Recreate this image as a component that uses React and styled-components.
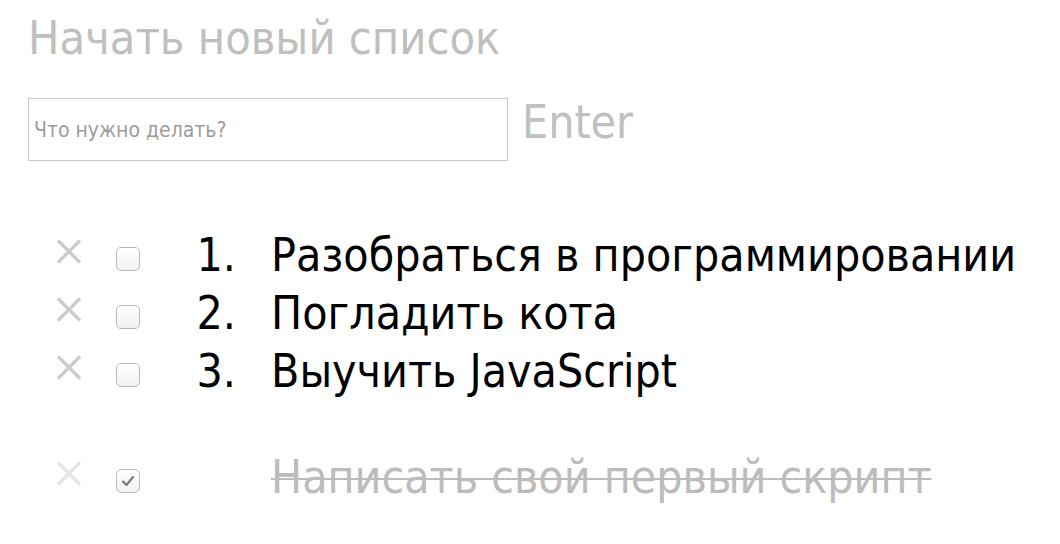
import React from "react";
import styled, { createGlobalStyle } from "styled-components";

const Global = createGlobalStyle`
  html, body { margin: 0; padding: 0; background: #fff; }
  body { font-family: "DejaVu Sans Condensed", "DejaVu Sans", sans-serif; }
`;

const Page = styled.div`
  padding: 11px 0 0 28px;
  width: 1032px;
  height: 533px;
  overflow: hidden;
`;

const Title = styled.h1`
  margin: 0;
  font-size: 46.5px;
  line-height: 55px;
  font-weight: normal;
  color: #bfbfbf;
`;

const Form = styled.div`
  display: flex;
  align-items: flex-start;
  margin-top: 32px;
`;

const Input = styled.input`
  box-sizing: border-box;
  width: 480px;
  height: 63px;
  border: 1px solid #c8c8c8;
  padding: 0 5px;
  font-family: inherit;
  font-size: 21px;
  outline: none;
  &::placeholder { color: #9c9c9c; }
`;

const EnterLabel = styled.span`
  margin-left: 14px;
  margin-top: -4px;
  font-size: 46px;
  line-height: 56px;
  color: #c0c0c0;
`;

const List = styled.div`
  margin-top: 65px;
`;

const Row = styled.div`
  display: flex;
  align-items: flex-start;
  height: 58px;
  margin-top: ${(p) => (p.$gap ? "48px" : "0")};
  padding-left: 28px;
`;

const DeleteBtn = styled.button`
  width: 26px;
  height: 25px;
  margin-top: 13px;
  padding: 0;
  border: 0;
  background: none;
  display: flex;
  svg { display: block; }
`;

const Check = styled.span`
  box-sizing: border-box;
  width: 24px;
  height: 24px;
  margin: 21px 0 0 34px;
  border: 1px solid #b9b9b9;
  border-radius: 5px;
  background: linear-gradient(#ffffff, #f1f1f1);
  display: flex;
  align-items: center;
  justify-content: center;
`;

const Num = styled.span`
  width: 96px;
  margin-right: 35px;
  text-align: right;
  font-size: 46px;
  line-height: 58px;
  color: #000;
`;

const Text = styled.span`
  font-size: 46px;
  line-height: 58px;
  white-space: nowrap;
  color: ${(p) => (p.$done ? "#bcbcbc" : "#000")};
  text-decoration: ${(p) => (p.$done ? "line-through" : "none")};
  text-decoration-thickness: 2px;
`;

const Cross = ({ color }) => (
  <svg width="26" height="25" viewBox="0 0 26 25">
    <path d="M2 1.5 L24 23.5 M24 1.5 L2 23.5" stroke={color} strokeWidth="3.4" fill="none" />
  </svg>
);

const Tick = () => (
  <svg width="14" height="12" viewBox="0 0 14 12">
    <path d="M2 6.5 L5.5 10 L12 2" stroke="#7a7a7a" strokeWidth="2.2" fill="none" strokeLinecap="round" strokeLinejoin="round" />
  </svg>
);

const todos = [
  "Разобраться в программировании",
  "Погладить кота",
  "Выучить JavaScript",
];

export default function App() {
  return (
    <>
      <Global />
      <Page>
        <Title>Начать новый список</Title>
        <Form>
          <Input placeholder="Что нужно делать?" />
          <EnterLabel>Enter</EnterLabel>
        </Form>
        <List>
          {todos.map((t, i) => (
            <Row key={t}>
              <DeleteBtn><Cross color="#cccccc" /></DeleteBtn>
              <Check />
              <Num>{i + 1}.</Num>
              <Text>{t}</Text>
            </Row>
          ))}
          <Row $gap>
            <DeleteBtn><Cross color="#e4e4e4" /></DeleteBtn>
            <Check><Tick /></Check>
            <Num />
            <Text $done>Написать свой первый скрипт</Text>
          </Row>
        </List>
      </Page>
    </>
  );
}
